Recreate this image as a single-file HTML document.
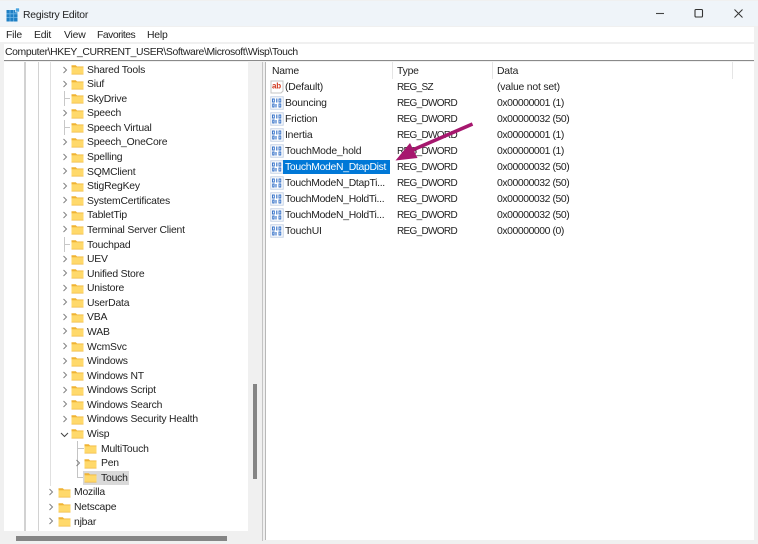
<!DOCTYPE html>
<html lang="en"><head><meta charset="utf-8"><title>Registry Editor</title>
<style>
html,body{margin:0;padding:0}
body{width:758px;height:544px;position:relative;overflow:hidden;background:#f0f0f0;font-family:"Liberation Sans",sans-serif;font-size:10.4px;color:#222;letter-spacing:-.2px}
.a{position:absolute}
.t{position:absolute;white-space:nowrap;line-height:14px;height:14px;margin-top:1px}
.t[style*="left:397px"]{font-size:10px;letter-spacing:-.68px}
.t[style*="left:497px"]{letter-spacing:-.42px}
svg.i{position:absolute;overflow:visible}
</style></head><body>
<svg width="0" height="0" style="position:absolute">
<defs>
<symbol id="f" viewBox="0 0 13 11"><path d="M0.500 1.200h4.300l1.200 1.300h6.500v8H0.500z" fill="#f0b333"/><path d="M0.500 3.300h12v7.200h-12z" fill="#ffd96b"/><path d="M0.500 9.800h12v.7h-12z" fill="#efb53a"/></symbol>
<symbol id="c" viewBox="0 0 6 8"><path d="M1.500 1l3 3-3 3" fill="none" stroke="#808080" stroke-width="1"/></symbol>
<symbol id="r" viewBox="0 0 14 14"><rect x="0.800" y="0.800" width="12.400" height="12.400" fill="#fff" stroke="#c3d1e5" stroke-width="1"/><path d="M2.500 3h1.800v3H2.500zM9 3h1.800v3H9zM2.700 8h1.400v3H2.700zM9 8h1.800v3H9z" fill="none" stroke="#2f6dc6" stroke-width=".9"/><path d="M6.800 2.500v4M6 8v3.500M8 8v0" fill="none" stroke="#2f6dc6" stroke-width="1.100"/></symbol>
</defs></svg>

<div class="a" style="left:0;top:1px;width:758px;height:25px;background:#eff4f9"></div>
<svg class="i" style="left:6px;top:8px" width="14" height="14" viewBox="0 0 14 14"><rect x="0.500" y="2" width="11" height="11.500" fill="#1f7fc4"/><path d="M4 2v11.500M7.700 2v11.500M0.500 5.800h11M0.500 9.600h11" stroke="#6fb6e6" stroke-width=".8"/><rect x="9.500" y="0" width="4" height="4" fill="#4aa3df" stroke="#fff" stroke-width=".6"/></svg>
<div class="t" style="left:23px;top:8px">Registry Editor</div>
<svg class="i" style="left:655px;top:8px" width="90" height="12"><path d="M1 5.500h8" stroke="#444" stroke-width="1.100"/><rect x="40" y="1.500" width="7.500" height="7.500" rx="1" fill="none" stroke="#333" stroke-width="1.100"/><path d="M79.500 1.500l8 8M87.500 1.500l-8 8" stroke="#333" stroke-width="1"/></svg>

<div class="a" style="left:0;top:27px;width:754px;height:15px;background:#fff"></div>
<div class="t" style="left:6px;top:28px">File</div>
<div class="t" style="left:34px;top:28px">Edit</div>
<div class="t" style="left:64px;top:28px">View</div>
<div class="t" style="left:97px;top:28px;letter-spacing:-.5px">Favorites</div>
<div class="t" style="left:147px;top:28px">Help</div>

<div class="a" style="left:4px;top:44px;width:750px;height:16px;background:#fff"></div>
<div class="t" style="left:5px;top:45px;letter-spacing:-.37px">Computer\HKEY_CURRENT_USER\Software\Microsoft\Wisp\Touch</div>
<div class="a" style="left:4px;top:60px;width:750px;height:1px;background:#8a8a8a"></div>

<!-- tree -->
<div class="a" style="left:4px;top:62px;width:244px;height:469px;background:#fff"></div>
<div class="a" style="left:24px;top:62px;width:1.500px;height:469px;background:#d2d2d2"></div>
<div class="a" style="left:37.500px;top:62px;width:1.500px;height:469px;background:#d2d2d2"></div>
<div class="a" style="left:50px;top:62px;width:1px;height:424px;background:#e0e0e0"></div>
<div class="a" style="left:64px;top:91px;width:1px;height:15px;background:#c8c8c8"></div>
<div class="a" style="left:64px;top:120px;width:1px;height:15px;background:#c8c8c8"></div>
<div class="a" style="left:64px;top:237px;width:1px;height:15px;background:#c8c8c8"></div>
<div class="a" style="left:77px;top:441px;width:1px;height:37px;background:#c4c4c4"></div>
<div class="a" style="left:77px;top:448px;width:7px;height:1px;background:#c4c4c4"></div>
<div class="a" style="left:77px;top:477px;width:7px;height:1px;background:#c4c4c4"></div>
<div class="a" style="left:64px;top:98px;width:6px;height:1px;background:#c8c8c8"></div>
<div class="a" style="left:64px;top:127px;width:6px;height:1px;background:#c8c8c8"></div>
<div class="a" style="left:64px;top:244px;width:6px;height:1px;background:#c8c8c8"></div>
<div class="a" style="left:83px;top:471px;width:46px;height:14px;background:#d9d9d9"></div>

<svg class="i" style="left:61.500px;top:66px" width="6" height="8"><use href="#c"/></svg><svg class="i" style="left:71px;top:64px" width="13" height="11"><use href="#f"/></svg><div class="t" style="left:87px;top:62.500px">Shared Tools</div>
<svg class="i" style="left:61.500px;top:80px" width="6" height="8"><use href="#c"/></svg><svg class="i" style="left:71px;top:79px" width="13" height="11"><use href="#f"/></svg><div class="t" style="left:87px;top:77px">Siuf</div>
<svg class="i" style="left:71px;top:93px" width="13" height="11"><use href="#f"/></svg><div class="t" style="left:87px;top:91.700px">SkyDrive</div>
<svg class="i" style="left:61.500px;top:109px" width="6" height="8"><use href="#c"/></svg><svg class="i" style="left:71px;top:108px" width="13" height="11"><use href="#f"/></svg><div class="t" style="left:87px;top:106.200px">Speech</div>
<svg class="i" style="left:71px;top:122px" width="13" height="11"><use href="#f"/></svg><div class="t" style="left:87px;top:120.800px">Speech Virtual</div>
<svg class="i" style="left:61.500px;top:138px" width="6" height="8"><use href="#c"/></svg><svg class="i" style="left:71px;top:137px" width="13" height="11"><use href="#f"/></svg><div class="t" style="left:87px;top:135.400px">Speech_OneCore</div>
<svg class="i" style="left:61.500px;top:153px" width="6" height="8"><use href="#c"/></svg><svg class="i" style="left:71px;top:152px" width="13" height="11"><use href="#f"/></svg><div class="t" style="left:87px;top:150px">Spelling</div>
<svg class="i" style="left:61.500px;top:167px" width="6" height="8"><use href="#c"/></svg><svg class="i" style="left:71px;top:166px" width="13" height="11"><use href="#f"/></svg><div class="t" style="left:87px;top:164.600px">SQMClient</div>
<svg class="i" style="left:61.500px;top:182px" width="6" height="8"><use href="#c"/></svg><svg class="i" style="left:71px;top:181px" width="13" height="11"><use href="#f"/></svg><div class="t" style="left:87px;top:179.100px">StigRegKey</div>
<svg class="i" style="left:61.500px;top:196px" width="6" height="8"><use href="#c"/></svg><svg class="i" style="left:71px;top:195px" width="13" height="11"><use href="#f"/></svg><div class="t" style="left:87px;top:193.700px">SystemCertificates</div>
<svg class="i" style="left:61.500px;top:211px" width="6" height="8"><use href="#c"/></svg><svg class="i" style="left:71px;top:210px" width="13" height="11"><use href="#f"/></svg><div class="t" style="left:87px;top:208.300px">TabletTip</div>
<svg class="i" style="left:61.500px;top:225px" width="6" height="8"><use href="#c"/></svg><svg class="i" style="left:71px;top:224px" width="13" height="11"><use href="#f"/></svg><div class="t" style="left:87px;top:222.900px">Terminal Server Client</div>
<svg class="i" style="left:71px;top:239px" width="13" height="11"><use href="#f"/></svg><div class="t" style="left:87px;top:237.500px">Touchpad</div>
<svg class="i" style="left:61.500px;top:255px" width="6" height="8"><use href="#c"/></svg><svg class="i" style="left:71px;top:254px" width="13" height="11"><use href="#f"/></svg><div class="t" style="left:87px;top:252px">UEV</div>
<svg class="i" style="left:61.500px;top:269px" width="6" height="8"><use href="#c"/></svg><svg class="i" style="left:71px;top:268px" width="13" height="11"><use href="#f"/></svg><div class="t" style="left:87px;top:266.600px">Unified Store</div>
<svg class="i" style="left:61.500px;top:284px" width="6" height="8"><use href="#c"/></svg><svg class="i" style="left:71px;top:283px" width="13" height="11"><use href="#f"/></svg><div class="t" style="left:87px;top:281.200px">Unistore</div>
<svg class="i" style="left:61.500px;top:298px" width="6" height="8"><use href="#c"/></svg><svg class="i" style="left:71px;top:297px" width="13" height="11"><use href="#f"/></svg><div class="t" style="left:87px;top:295.800px">UserData</div>
<svg class="i" style="left:61.500px;top:313px" width="6" height="8"><use href="#c"/></svg><svg class="i" style="left:71px;top:312px" width="13" height="11"><use href="#f"/></svg><div class="t" style="left:87px;top:310.400px">VBA</div>
<svg class="i" style="left:61.500px;top:327px" width="6" height="8"><use href="#c"/></svg><svg class="i" style="left:71px;top:326px" width="13" height="11"><use href="#f"/></svg><div class="t" style="left:87px;top:324.900px">WAB</div>
<svg class="i" style="left:61.500px;top:342px" width="6" height="8"><use href="#c"/></svg><svg class="i" style="left:71px;top:341px" width="13" height="11"><use href="#f"/></svg><div class="t" style="left:87px;top:339.500px">WcmSvc</div>
<svg class="i" style="left:61.500px;top:357px" width="6" height="8"><use href="#c"/></svg><svg class="i" style="left:71px;top:356px" width="13" height="11"><use href="#f"/></svg><div class="t" style="left:87px;top:354.100px">Windows</div>
<svg class="i" style="left:61.500px;top:371px" width="6" height="8"><use href="#c"/></svg><svg class="i" style="left:71px;top:370px" width="13" height="11"><use href="#f"/></svg><div class="t" style="left:87px;top:368.700px">Windows NT</div>
<svg class="i" style="left:61.500px;top:386px" width="6" height="8"><use href="#c"/></svg><svg class="i" style="left:71px;top:385px" width="13" height="11"><use href="#f"/></svg><div class="t" style="left:87px;top:383.300px">Windows Script</div>
<svg class="i" style="left:61.500px;top:400px" width="6" height="8"><use href="#c"/></svg><svg class="i" style="left:71px;top:399px" width="13" height="11"><use href="#f"/></svg><div class="t" style="left:87px;top:397.800px">Windows Search</div>
<svg class="i" style="left:61.500px;top:415px" width="6" height="8"><use href="#c"/></svg><svg class="i" style="left:71px;top:414px" width="13" height="11"><use href="#f"/></svg><div class="t" style="left:87px;top:412.400px">Windows Security Health</div>
<svg class="i" style="left:60px;top:432px" width="9" height="6"><path d="M1 1l3.500 3.500L8 1" fill="none" stroke="#444" stroke-width="1"/></svg><svg class="i" style="left:71px;top:428px" width="13" height="11"><use href="#f"/></svg><div class="t" style="left:87px;top:427px">Wisp</div>
<svg class="i" style="left:84px;top:443px" width="13" height="11"><use href="#f"/></svg><div class="t" style="left:101px;top:441.600px">MultiTouch</div>
<svg class="i" style="left:75px;top:459px" width="6" height="8"><use href="#c"/></svg><svg class="i" style="left:84px;top:458px" width="13" height="11"><use href="#f"/></svg><div class="t" style="left:101px;top:456.200px">Pen</div>
<svg class="i" style="left:84px;top:472px" width="13" height="11"><use href="#f"/></svg><div class="t" style="left:101px;top:470.700px">Touch</div>
<svg class="i" style="left:48px;top:488px" width="6" height="8"><use href="#c"/></svg><svg class="i" style="left:58px;top:487px" width="13" height="11"><use href="#f"/></svg><div class="t" style="left:74px;top:485.300px">Mozilla</div>
<svg class="i" style="left:48px;top:503px" width="6" height="8"><use href="#c"/></svg><svg class="i" style="left:58px;top:502px" width="13" height="11"><use href="#f"/></svg><div class="t" style="left:74px;top:499.900px">Netscape</div>
<svg class="i" style="left:48px;top:517px" width="6" height="8"><use href="#c"/></svg><svg class="i" style="left:58px;top:516px" width="13" height="11"><use href="#f"/></svg><div class="t" style="left:74px;top:514.500px">njbar</div>

<!-- scrollbars -->
<div class="a" style="left:253px;top:384px;width:4px;height:95px;background:#858585"></div>
<div class="a" style="left:16px;top:536px;width:211px;height:5px;background:#858585"></div>
<div class="a" style="left:262px;top:62px;width:1px;height:479px;background:#c4c4c4"></div>

<!-- list -->
<div class="a" style="left:266px;top:62px;width:488px;height:478px;background:#fff"></div>
<div class="a" style="left:265px;top:62px;width:1px;height:478px;background:#b8b8b8"></div>
<div class="a" style="left:392px;top:62px;width:1px;height:17px;background:#e5e5e5"></div>
<div class="a" style="left:492px;top:62px;width:1px;height:17px;background:#e5e5e5"></div>
<div class="a" style="left:732px;top:62px;width:1px;height:17px;background:#e5e5e5"></div>
<div class="t" style="left:272px;top:64px">Name</div>
<div class="t" style="left:397px;top:64px;font-size:10.400px;letter-spacing:-.2px">Type</div>
<div class="t" style="left:497px;top:64px;letter-spacing:-.2px">Data</div>

<svg class="i" style="left:270px;top:80px" width="14" height="14" viewBox="0 0 14 14"><path d="M1 1h12v10l-2 2H1z" fill="#fff" stroke="#c4c4c4"/><text x="2" y="8.500" font-family="Liberation Sans" font-size="8" font-weight="bold" fill="#d0391f">ab</text></svg>
<div class="t" style="left:285px;top:80px">(Default)</div><div class="t" style="left:397px;top:80px">REG_SZ</div><div class="t" style="left:497px;top:80px;letter-spacing:-.2px">(value not set)</div>
<svg class="i" style="left:270px;top:96px" width="14" height="14"><use href="#r"/></svg>
<div class="t" style="left:285px;top:96px">Bouncing</div><div class="t" style="left:397px;top:96px">REG_DWORD</div><div class="t" style="left:497px;top:96px">0x00000001 (1)</div>
<svg class="i" style="left:270px;top:112px" width="14" height="14"><use href="#r"/></svg>
<div class="t" style="left:285px;top:112px">Friction</div><div class="t" style="left:397px;top:112px">REG_DWORD</div><div class="t" style="left:497px;top:112px">0x00000032 (50)</div>
<svg class="i" style="left:270px;top:128px" width="14" height="14"><use href="#r"/></svg>
<div class="t" style="left:285px;top:128px">Inertia</div><div class="t" style="left:397px;top:128px">REG_DWORD</div><div class="t" style="left:497px;top:128px">0x00000001 (1)</div>
<svg class="i" style="left:270px;top:144px" width="14" height="14"><use href="#r"/></svg>
<div class="t" style="left:285px;top:144px">TouchMode_hold</div><div class="t" style="left:397px;top:144px">REG_DWORD</div><div class="t" style="left:497px;top:144px">0x00000001 (1)</div>
<svg class="i" style="left:270px;top:160px" width="14" height="14"><use href="#r"/></svg>
<div class="a" style="left:283px;top:160px;width:107px;height:14px;background:#0078d7"></div>
<div class="t" style="left:285px;top:160px;color:#fff;letter-spacing:-.3px">TouchModeN_DtapDist</div><div class="t" style="left:397px;top:160px">REG_DWORD</div><div class="t" style="left:497px;top:160px">0x00000032 (50)</div>
<svg class="i" style="left:270px;top:176px" width="14" height="14"><use href="#r"/></svg>
<div class="t" style="left:285px;top:176px;letter-spacing:-.3px">TouchModeN_DtapTi...</div><div class="t" style="left:397px;top:176px">REG_DWORD</div><div class="t" style="left:497px;top:176px">0x00000032 (50)</div>
<svg class="i" style="left:270px;top:192px" width="14" height="14"><use href="#r"/></svg>
<div class="t" style="left:285px;top:192px;letter-spacing:-.3px">TouchModeN_HoldTi...</div><div class="t" style="left:397px;top:192px">REG_DWORD</div><div class="t" style="left:497px;top:192px">0x00000032 (50)</div>
<svg class="i" style="left:270px;top:208px" width="14" height="14"><use href="#r"/></svg>
<div class="t" style="left:285px;top:208px;letter-spacing:-.3px">TouchModeN_HoldTi...</div><div class="t" style="left:397px;top:208px">REG_DWORD</div><div class="t" style="left:497px;top:208px">0x00000032 (50)</div>
<svg class="i" style="left:270px;top:224px" width="14" height="14"><use href="#r"/></svg>
<div class="t" style="left:285px;top:224px">TouchUI</div><div class="t" style="left:397px;top:224px">REG_DWORD</div><div class="t" style="left:497px;top:224px">0x00000000 (0)</div>

<!-- arrow -->
<svg class="i" style="left:0;top:0" width="758" height="544"><path d="M472.500 124L408 152" stroke="#a6176e" stroke-width="3.600" fill="none"/><path d="M395.500 160.500L410 143L417.500 158z" fill="#a6176e"/></svg>
</body></html>
